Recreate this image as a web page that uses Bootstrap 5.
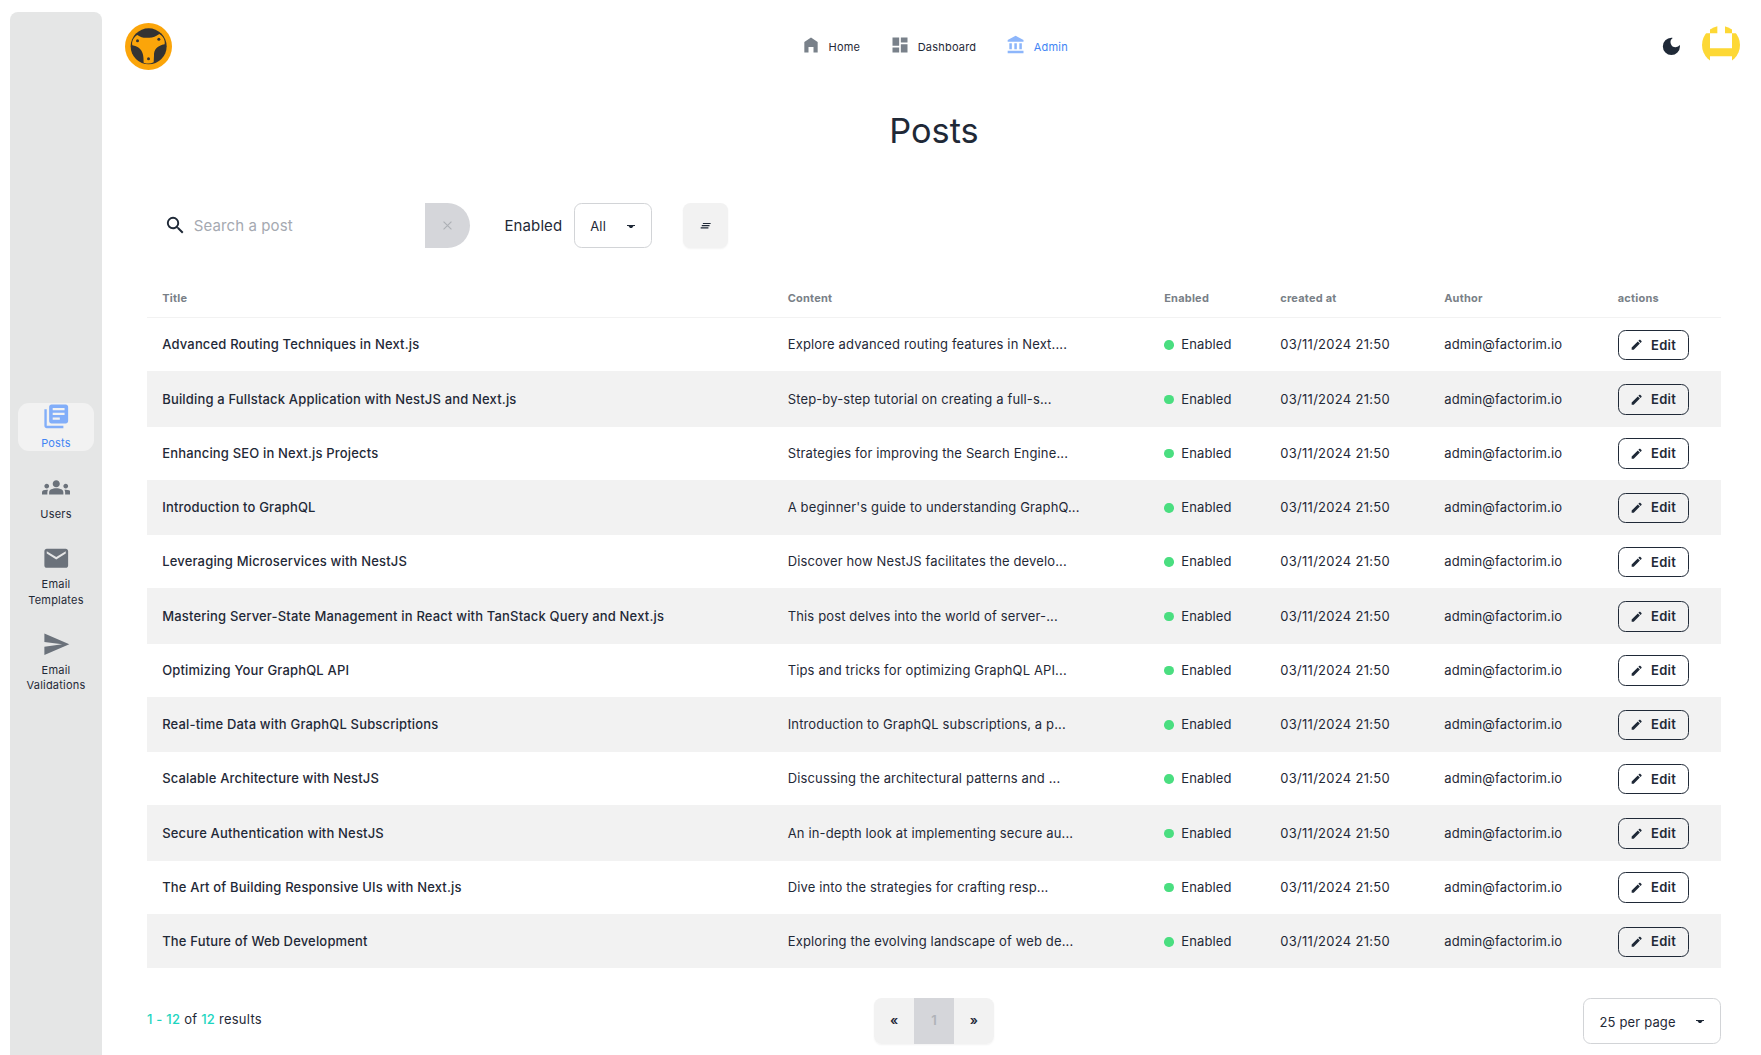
<!DOCTYPE html>
<html lang="en">
<head>
<meta charset="utf-8">
<meta name="viewport" content="width=device-width, initial-scale=1">
<title>Posts</title>
<link href="https://cdn.jsdelivr.net/npm/bootstrap@5.3.0/dist/css/bootstrap.min.css" rel="stylesheet">
<style>
  html { font-size: 15.2px; }
  body { font-family: Inter, "Liberation Sans", sans-serif; color: #1f2937; background: #fff; height: 100vh; overflow: hidden; }
  svg { display: block; fill: currentColor; flex: none; }
  .side-menu { width: 92px; height: 1073px; margin: 12px 0 0 10px; background: #e5e6e6; border-radius: 8px; gap: 22.8px; flex: none; }
  .side-link { width: 76px; color: #1f2937; font-size: 11px; letter-spacing: .2px; line-height: 15.2px; text-align: center; text-decoration: none; border-radius: 11px; }
  .side-link svg { width: 28.5px; height: 28.5px; margin: -1px auto 5.2px; color: #6b727b; }
  .side-link.active { background: #f2f2f2; color: #4285f4; }
  .side-link.active svg { color: #82aef9; }
  .top-bar { height: 93px; padding: 0 21.5px 0 23px; }
  .top-side { flex: 1 1 0; }
  .top-nav { gap: 29.5px; padding-left: 4px; }
  .top-link { display: flex; align-items: center; color: #1f2937; font-size: 11px; letter-spacing: .2px; text-decoration: none; padding-top: 1px; }
  .top-link svg { width: 20px; height: 20px; margin: 0 8px 5px 0; color: #79818a; }
  .top-link.active { color: #4285f4; }
  .top-link.active svg { color: #8db6fb; }
  .content { padding: 0 40px 0 45px; }
  .page-title { font-size: 34.3px; line-height: 38px; font-weight: 400; margin: 19px 0 53px; }
  .filters { height: 45px; }
  .search-box { width: 278px; padding-left: 17px; }
  .search-box input { border: 0; outline: 0; background: transparent; font-size: 15px; letter-spacing: .1px; padding: 1px 0 0; width: 200px; color: inherit; }
  .search-box input::placeholder { color: #a5a9b1; opacity: 1; }
  .filter-name { margin: 1px 11.5px 0 34.5px; font-size: 15px; letter-spacing: .1px; }
  .btn-clear { width: 45px; height: 45px; padding: 0; background: #d5d6da; color: #adb0b5; border: 0; border-radius: 0 22.8px 22.8px 0; }
  .select-box { height: 45px; padding: 2px 16px 0 15.5px; font-size: 13px; letter-spacing: .15px; border: 1px solid #d2d4d7; border-radius: 7.6px; background: #fff; color: inherit; }
  .btn-soft { width: 45px; height: 45px; background: #f2f2f2; border: 0; border-radius: 7.6px; padding: 0; box-shadow: 0 1px 2px rgba(0,0,0,.05); color: #1f2937; }
  .posts { table-layout: fixed; margin: 31.5px 0 0; font-size: 13px; letter-spacing: .14px; color: #1f2937; --bs-table-color: #1f2937; --bs-table-bg: transparent; border-color: #f2f2f2; border-collapse: separate; border-spacing: 0; }
  .posts > thead > tr > th { font-size: 11px; letter-spacing: .22px; font-weight: 700; color: #797f87; height: 38.5px; padding: 0 15.2px; vertical-align: middle; border-bottom: 1px solid #f2f2f2; }
  .posts > tbody > tr > td { height: 54.25px; padding: 1px 15.2px 0; border-bottom: 1px solid #f2f2f2; white-space: nowrap; }
  .posts > tbody > tr:last-child > td { border-bottom: 0; height: 53.5px; }
  .posts .post-title { font-weight: 500; letter-spacing: .17px; }
  .posts .post-date { letter-spacing: .29px; }
  .state-dot { width: 9.5px; height: 9.5px; border-radius: 50%; background: #4ade80; margin-right: 7.5px; }
  .btn-edit { height: 30.4px; padding: 0 11.4px; gap: 7.6px; font-size: 13px; letter-spacing: .3px; font-weight: 600; line-height: 1; border: 1px solid #1f2937; border-radius: 7.6px; color: #1f2937; }
  .results { flex: 1 1 0; font-size: 13px; letter-spacing: .25px; line-height: 20px; padding-top: 11px; }
  .results b { font-weight: 500; color: #1dd5c0; }
  .pager { border-radius: 7.6px; box-shadow: 0 1px 2px rgba(0,0,0,.05); overflow: hidden; }
  .pager .btn { height: 45.6px; padding: 0; width: 40.3px; border: 0; border-radius: 0; background: #f2f2f2; font-size: 13px; font-weight: 600; color: #1f2937; }
  .pager .btn.current { width: 39.4px; background: #d5d6da; color: #b0b3b8; }
  footer .select-box { height: 46px; }
</style>
</head>
<body>
<svg class="d-none" aria-hidden="true">
  <symbol id="i-caret" viewBox="0 0 8 4"><path d="M0 0h8v1H6.500L5 3H3L1.500 1H0z"/></symbol>
  <symbol id="i-pen" viewBox="0 0 24 24"><path d="M3 17.25V21h3.75L17.81 9.94l-3.75-3.75L3 17.25zM20.71 7.04a1 1 0 0 0 0-1.41l-2.34-2.34a1 1 0 0 0-1.41 0l-1.83 1.83 3.75 3.75 1.83-1.83z"/></symbol>
</svg>
<div class="d-flex">
  <aside class="side-menu d-flex flex-column align-items-center justify-content-center">
    <a class="side-link active" href="#"><svg viewBox="0 0 24 24"><path d="M4 6H2v14c0 1.1.9 2 2 2h14v-2H4V6zm16-4H8c-1.1 0-2 .9-2 2v12c0 1.1.9 2 2 2h12c1.1 0 2-.9 2-2V4c0-1.1-.9-2-2-2zm-1 9H9V9h10v2zm-4 4H9v-2h6v2zm4-8H9V5h10v2z"/></svg>Posts</a>
    <a class="side-link" href="#"><svg viewBox="0 0 24 24"><path d="M12 12.75c1.63 0 3.07.39 4.24.9 1.08.48 1.76 1.56 1.76 2.73V18H6v-1.61c0-1.18.68-2.26 1.76-2.73 1.17-.52 2.61-.91 4.24-.91zM4 13c1.1 0 2-.9 2-2s-.9-2-2-2-2 .9-2 2 .9 2 2 2zm1.13 1.1c-.37-.06-.74-.1-1.13-.1-.99 0-1.93.21-2.78.58A2.01 2.01 0 0 0 0 16.43V18h4.5v-1.61c0-.83.23-1.61.63-2.29zM20 13c1.1 0 2-.9 2-2s-.9-2-2-2-2 .9-2 2 .9 2 2 2zm4 3.43c0-.81-.48-1.53-1.22-1.85A6.95 6.95 0 0 0 20 14c-.39 0-.76.04-1.13.1.4.68.63 1.46.63 2.29V18H24v-1.57zM12 6c1.66 0 3 1.34 3 3s-1.34 3-3 3-3-1.34-3-3 1.34-3 3-3z"/></svg>Users</a>
    <a class="side-link" href="#"><svg viewBox="0 0 24 24"><path d="M20 4H4c-1.1 0-1.99.9-1.99 2L2 18c0 1.1.9 2 2 2h16c1.1 0 2-.9 2-2V6c0-1.1-.9-2-2-2zm0 4l-8 5-8-5V6l8 5 8-5v2z"/></svg>Email<br>Templates</a>
    <a class="side-link" href="#"><svg viewBox="0 0 24 24"><path d="M2.01 21L23 12 2.01 3 2 10l15 2-15 2z"/></svg>Email<br>Validations</a>
  </aside>
  <div class="flex-grow-1">
    <header class="top-bar d-flex align-items-center">
      <div class="top-side">
        <svg width="47" height="47" viewBox="0 0 141 141"><circle cx="70.5" cy="70.5" r="70.5" fill="#fba50a"/><circle cx="71" cy="70" r="54" fill="#333"/><path fill="#fba50a" d="M37 36C48 43 58 46 69 44 82 45 92 41 103 33 115 40 121 52 119 64 98 68 86 78 87 98L86 118Q72 125 56 119C56 98 55 73 22 67 19 56 26 42 37 36z"/><circle cx="37.500" cy="53" r="4.500" fill="#333"/><circle cx="101.500" cy="49" r="4.500" fill="#333"/><circle cx="70.500" cy="107" r="4.500" fill="#333"/></svg>
      </div>
      <nav class="top-nav d-flex align-items-center">
        <a class="top-link" href="#"><svg viewBox="0 0 24 24"><path d="M4 21V8.500L12 3l8 5.500V21h-5v-6.500H9V21z"/></svg>Home</a>
        <a class="top-link" href="#"><svg viewBox="0 0 24 24"><path d="M3 13h8V3H3v10zm0 8h8v-6H3v6zm10 0h8V11h-8v10zm0-18v6h8V3h-8z"/></svg>Dashboard</a>
        <a class="top-link active" href="#"><svg viewBox="0 0 24 24"><path d="M4 10v7h3v-7H4zm6 0v7h3v-7h-3zM2 22h19v-3H2v3zm14-12v7h3v-7h-3zm-4.500-9L2 6v2h19V6l-9.500-5z"/></svg>Admin</a>
      </nav>
      <div class="top-side d-flex align-items-center justify-content-end">
        <svg class="me-3" width="22.800" height="22.800" viewBox="0 0 24 24"><path d="M12 3a9 9 0 1 0 9 9c0-.46-.04-.92-.1-1.360a5.389 5.389 0 0 1-4.400 2.260 5.403 5.403 0 0 1-3.140-9.800c-.44-.06-.9-.1-1.360-.1z"/></svg>
        <svg class="ms-1 mb-1" width="38" height="38" viewBox="0 0 114 114" fill="#fdd835"><clipPath id="round"><circle cx="57" cy="57" r="57"/></clipPath><g clip-path="url(#round)" fill="#fdd835"><path d="M24 0h22v22H24zM69 0h21v22H69zM0 22h24v45h66V22h24v92H90V91H24v23H0z"/></g></svg>
      </div>
    </header>
    <main class="content">
      <h1 class="page-title text-center">Posts</h1>
      <div class="filters d-flex align-items-center">
        <div class="search-box d-flex align-items-center">
          <svg width="22.800" height="22.800" viewBox="0 0 24 24"><path d="M15.500 14h-.79l-.28-.27A6.471 6.471 0 0 0 16 9.500 6.500 6.500 0 1 0 9.500 16c1.610 0 3.090-.59 4.230-1.570l.27.28v.79l5 4.990L20.490 19l-4.990-5zm-6 0C7.010 14 5 11.990 5 9.500S7.010 5 9.500 5 14 7.010 14 9.500 11.990 14 9.500 14z"/></svg>
          <input type="text" placeholder="Search a post" style="margin-left:7px">
        </div>
        <button class="btn btn-clear d-flex align-items-center justify-content-center" aria-label="Clear"><svg width="9" height="9" viewBox="0 0 8 8" fill="none" stroke="currentColor"><path d="M.5.5l7 7M7.500.5l-7 7"/></svg></button>
        <span class="filter-name">Enabled</span>
        <button class="select-box d-flex align-items-center justify-content-between" style="width:78px">All<svg width="8" height="4"><use href="#i-caret"/></svg></button>
        <button class="btn-soft d-flex align-items-center justify-content-center" style="margin-left:31px" aria-label="Reset filters"><svg width="13.300" height="13.300" viewBox="0 0 24 24"><path d="M5 13h14v-2H5v2zm-2 4h14v-2H3v2zM7 7v2h14V7H7z"/></svg></button>
      </div>
      <table class="posts table table-borderless">
        <colgroup><col style="width:625.500px"><col style="width:376.500px"><col style="width:116px"><col style="width:164px"><col style="width:173.500px"><col></colgroup>
        <thead><tr><th>Title</th><th>Content</th><th>Enabled</th><th>created at</th><th>Author</th><th>actions</th></tr></thead>
        <tbody id="rows"></tbody>
      </table>
      <footer class="d-flex align-items-start" style="margin-top:30px">
        <div class="results"><b>1 - 12</b> of <b>12</b> results</div>
        <div class="pager d-flex"><button class="btn">«</button><button class="btn current">1</button><button class="btn">»</button></div>
        <div class="d-flex justify-content-end" style="flex:1 1 0"><button class="select-box d-flex align-items-center justify-content-between" style="width:138px">25 per page<svg width="8" height="4"><use href="#i-caret"/></svg></button></div>
      </footer>
    </main>
  </div>
</div>
<script src="https://cdn.jsdelivr.net/npm/bootstrap@5.3.0/dist/js/bootstrap.bundle.min.js"></script>
<script>
  const posts = [
    ["Advanced Routing Techniques in Next.js", "Explore advanced routing features in Next...."],
    ["Building a Fullstack Application with NestJS and Next.js", "Step-by-step tutorial on creating a full-s..."],
    ["Enhancing SEO in Next.js Projects", "Strategies for improving the Search Engine..."],
    ["Introduction to GraphQL", "A beginner's guide to understanding GraphQ..."],
    ["Leveraging Microservices with NestJS", "Discover how NestJS facilitates the develo..."],
    ["Mastering Server-State Management in React with TanStack Query and Next.js", "This post delves into the world of server-..."],
    ["Optimizing Your GraphQL API", "Tips and tricks for optimizing GraphQL API..."],
    ["Real-time Data with GraphQL Subscriptions", "Introduction to GraphQL subscriptions, a p..."],
    ["Scalable Architecture with NestJS", "Discussing the architectural patterns and ..."],
    ["Secure Authentication with NestJS", "An in-depth look at implementing secure au..."],
    ["The Art of Building Responsive UIs with Next.js", "Dive into the strategies for crafting resp..."],
    ["The Future of Web Development", "Exploring the evolving landscape of web de..."]
  ];
  document.getElementById("rows").innerHTML = posts.map(([title, text], i) => `
    <tr class="align-middle"${i % 2 ? ' style="background:#f2f2f2"' : ''}>
      <td class="post-title">${title}</td><td>${text}</td>
      <td><div class="d-flex align-items-center"><span class="state-dot"></span>Enabled</div></td>
      <td class="post-date">03/11/2024 21:50</td><td>admin@factorim.io</td>
      <td><button class="btn btn-edit d-inline-flex align-items-center"><svg width="13.3" height="13.3"><use href="#i-pen"/></svg>Edit</button></td>
    </tr>`).join("");
</script>
</body>
</html>
